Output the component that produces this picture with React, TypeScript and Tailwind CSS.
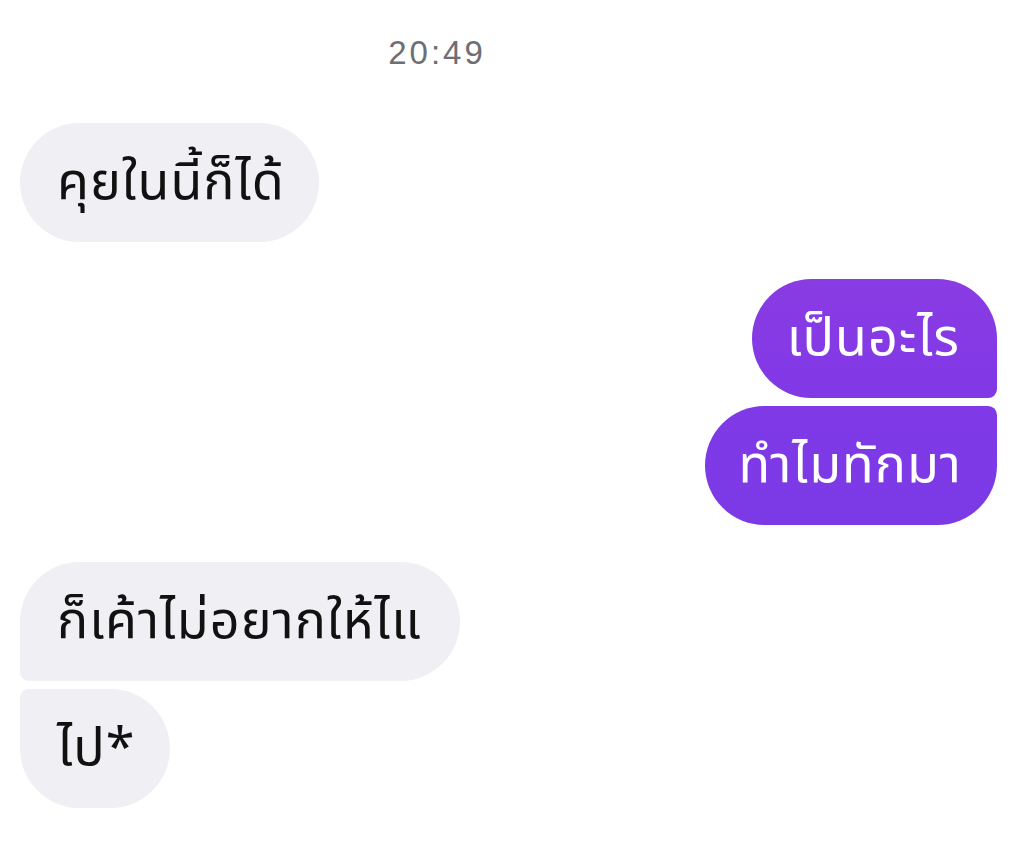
export default function App() {
  const thai = { fontFamily: '"Noto Sans Thai", "Noto Sans", sans-serif' };
  const bubble = 'flex items-center h-[119px] text-[52px] tracking-[1px] leading-none';
  return (
    <div className="w-[1022px] h-[841px] bg-white overflow-hidden" style={thai}>
      <div className="pt-[30px] pr-[148px] flex justify-center">
        <span className="text-[33px] leading-[46px] tracking-[3px] text-[#6e6e75]" style={{ fontFamily: '"Liberation Sans", Arial, sans-serif' }}>20:49</span>
      </div>
      <div className="mt-[47px] pl-[20px] pr-[25px] flex flex-col">
        <div className={`${bubble} self-start pl-[37px] pr-[34px] rounded-[60px] bg-[#efeff4] text-[#111]`}>คุยในนี้ก็ได้</div>
        <div className={`${bubble} self-end mt-[37px] pl-[35px] pr-[37px] rounded-l-[60px] rounded-tr-[60px] rounded-br-[9px] bg-gradient-to-b from-[#8a3be3] to-[#8039e6] text-white`}>เป็นอะไร</div>
        <div className={`${bubble} self-end mt-[8px] h-[118px] pl-[34px] pr-[35px] rounded-l-[60px] rounded-br-[60px] rounded-tr-[9px] bg-gradient-to-b from-[#8039e6] to-[#7b3ae6] text-white`}>ทำไมทักมา</div>
        <div className={`${bubble} self-start mt-[37px] pl-[37px] pr-[38px] rounded-r-[60px] rounded-tl-[60px] rounded-bl-[9px] bg-[#efeff4] text-[#111]`}>ก็เค้าไม่อยากให้ไแ</div>
        <div className={`${bubble} self-start mt-[8px] h-[118px] pl-[37px] pr-[35px] rounded-r-[60px] rounded-bl-[60px] rounded-tl-[9px] bg-[#efeff4] text-[#111]`}>ไป*</div>
      </div>
    </div>
  );
}
